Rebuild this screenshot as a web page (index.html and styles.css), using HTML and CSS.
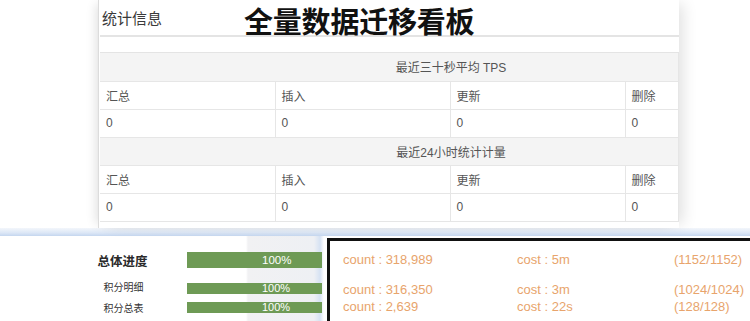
FILE: index.html
```html
<!DOCTYPE html>
<html lang="zh">
<head>
<meta charset="utf-8">
<link rel="stylesheet" href="styles.css">
</head>
<body>
<div class="page">
  <section class="top">
    <div class="card">
      <div class="card-head">统计信息</div>
      <div class="card-gap"></div>
      <table class="stats">
        <colgroup><col class="c1"><col class="c2"><col class="c3"><col class="c4"></colgroup>
        <tr class="group"><th colspan="4">最近三十秒平均 TPS</th></tr>
        <tr><td>汇总</td><td>插入</td><td>更新</td><td>删除</td></tr>
        <tr><td>0</td><td>0</td><td>0</td><td>0</td></tr>
        <tr class="group"><th colspan="4">最近24小时统计计量</th></tr>
        <tr><td>汇总</td><td>插入</td><td>更新</td><td>删除</td></tr>
        <tr><td>0</td><td>0</td><td>0</td><td>0</td></tr>
      </table>
    </div>
    <h1 class="board-title">全量数据迁移看板</h1>
  </section>
  <div class="band"></div>
  <section class="bottom">
    <div class="progress">
      <div class="p-row main">
        <div class="p-label">总体进度</div>
        <div class="bar"><span>100%</span></div>
      </div>
      <div class="p-row second">
        <div class="p-label">积分明细</div>
        <div class="bar"><span>100%</span></div>
      </div>
      <div class="p-row third">
        <div class="p-label">积分总表</div>
        <div class="bar"><span>100%</span></div>
      </div>
    </div>
    <div class="result">
      <div class="r-row first"><span>count : 318,989</span><span>cost : 5m</span><span>(1152/1152)</span></div>
      <div class="r-row second"><span>count : 316,350</span><span>cost : 3m</span><span>(1024/1024)</span></div>
      <div class="r-row third"><span>count : 2,639</span><span>cost : 22s</span><span>(128/128)</span></div>
    </div>
  </section>
</div>
</body>
</html>
```

FILE: styles.css
```css
* { box-sizing: border-box; }
html, body { margin: 0; padding: 0; background: #fff; }
body {
  width: 750px;
  height: 321px;
  overflow: hidden;
  font-family: "Liberation Sans", "Noto Sans CJK SC", sans-serif;
}
.page { width: 750px; height: 321px; display: flex; flex-direction: column; }

.top {
  position: relative;
  height: 228px;
  padding-left: 98px;
  display: flex;
}
.card {
  width: 581px;
  height: 228px;
  background: #fff;
  border-left: 1px solid #dcdcdc;
  padding-left: 1px;
  box-shadow: -6px 0 10px -4px rgba(0,0,0,0.12), 8px 0 14px -4px rgba(0,0,0,0.12);
}
.card-head {
  height: 37px;
  border-bottom: 2px solid #e4e4e4;
  padding: 8px 0 0 2px;
  font-size: 15px;
  color: #3a3a3a;
  font-family: "Noto Sans CJK SC", sans-serif;
  line-height: 20px;
}
.card-gap {
  height: 16px;
  border-bottom: 1px solid #e4e4e4;
}
.stats {
  width: 579px;
  border-collapse: collapse;
  table-layout: fixed;
  font-family: "Liberation Sans", "Noto Sans CJK SC", sans-serif;
  font-size: 12px;
  color: #555;
}
.stats col.c1, .stats col.c2, .stats col.c3 { width: 175px; }
.stats td, .stats th {
  height: 28px;
  border: 1px solid #e6e6e6;
  padding: 0 0 0 6px;
  text-align: left;
  font-weight: normal;
}
.stats tr.group th {
  background: #f4f4f4;
  text-align: center;
  padding-left: 124px;
  height: 28px;
}
.stats tr:first-child th { border-top: none; }
.stats td:first-child, .stats th:first-child { border-left: none; }

.board-title {
  position: absolute;
  left: 244px;
  top: 3px;
  margin: 0;
  font-size: 29px;
  line-height: 34px;
  font-weight: bold;
  color: #111;
  font-family: "Noto Sans CJK SC", sans-serif;
  letter-spacing: -0.2px;
}

.band {
  height: 8px;
  background: linear-gradient(to bottom, #f3f6fb 0%, #dce7f6 60%, #c4d6ef 100%);
}

.bottom {
  flex: 1;
  display: flex;
  background: #fff;
}
.progress {
  width: 327px;
  display: flex;
  flex-direction: column;
  padding: 16px 0 0 60px;
  background: linear-gradient(to right, #fff 0, #fff 246px, #f1f1f3 248px, #eef0f4 314px, #d6e2f3 320px, #fff 324px);
}
.p-row {
  display: flex;
  height: 11px;
}
.p-row.main { height: 16px; }
.p-row.second { margin-top: 15px; }
.p-row.third { margin-top: 8px; }
.p-label {
  width: 127px;
  display: flex;
  align-items: center;
  justify-content: center;
  font-family: "Noto Sans CJK SC", sans-serif;
  font-size: 10px;
  color: #333;
  line-height: 11px;
  white-space: nowrap;
}
.p-row.main .p-label {
  font-size: 12.5px;
  font-weight: bold;
  color: #2a2a2a;
  padding-right: 2px;
}
.p-row.second .p-label { padding-bottom: 0; position: relative; top: -2px; }
.bar {
  width: 135px;
  background: #6e9a55;
  color: #fff;
  font-size: 11px;
  line-height: 11px;
  display: flex;
  align-items: center;
  padding-left: 75px;
  overflow: hidden;
  white-space: nowrap;
}
.p-row.main .bar { font-size: 11.5px; }

.result {
  flex: 1;
  margin-top: 2px;
  border-top: 3px solid #111;
  border-left: 3px solid #111;
  padding: 11px 0 0 13px;
  color: #e8a46c;
  font-size: 13px;
  line-height: 16px;
}
.r-row {
  display: grid;
  grid-template-columns: 174px 157px auto;
}
.r-row.second { margin-top: 14px; }
.r-row.third { margin-top: 1px; }
```
